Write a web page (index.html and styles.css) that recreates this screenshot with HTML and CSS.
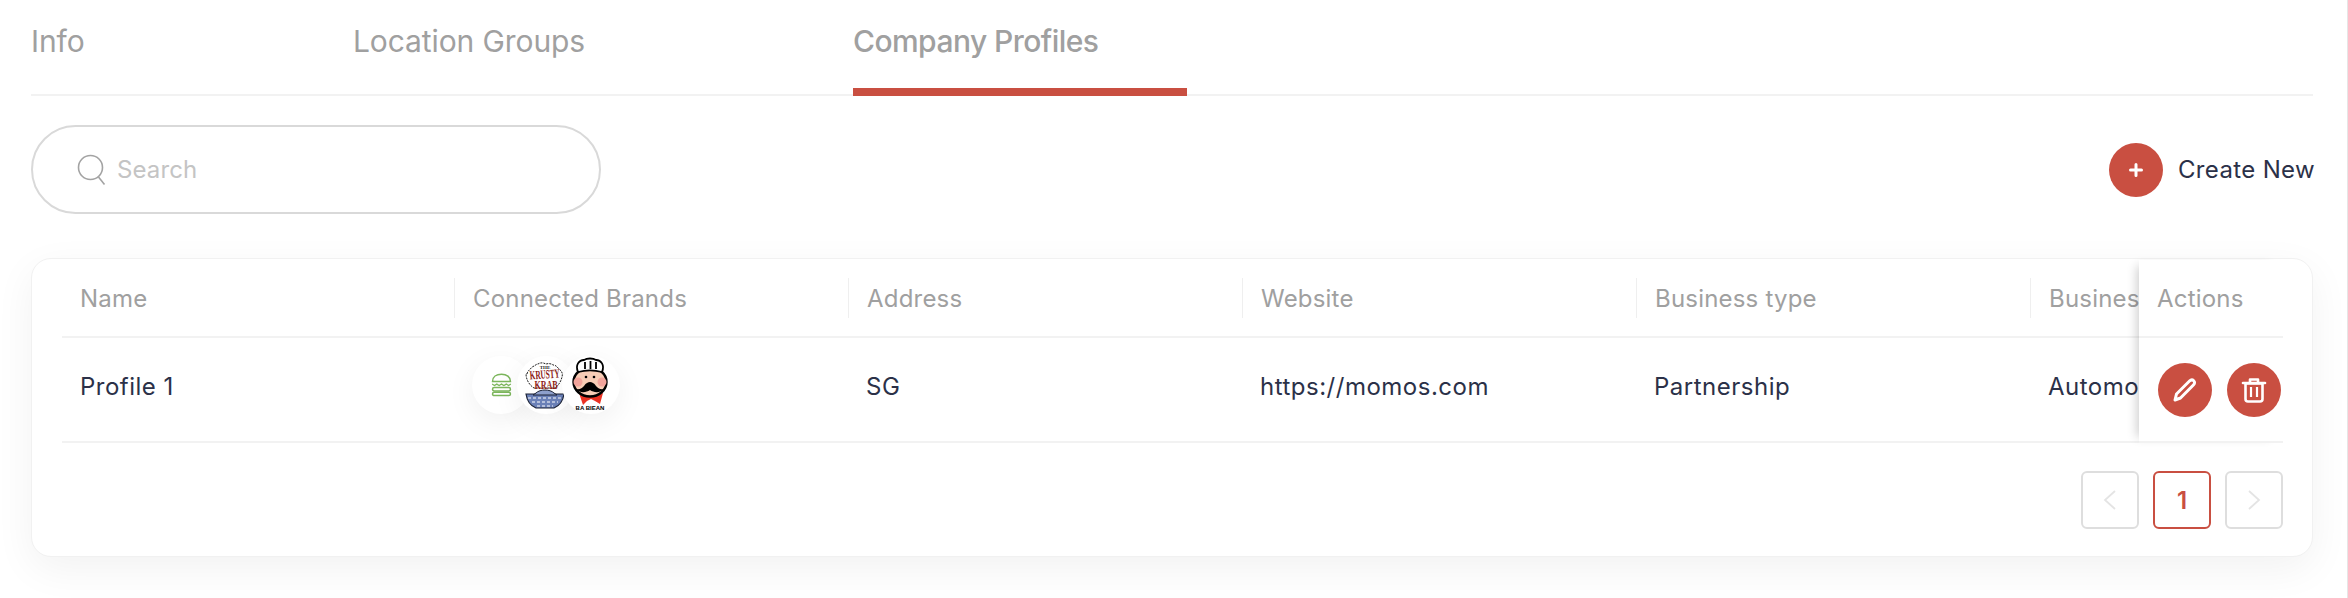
FILE: index.html
```html
<!DOCTYPE html>
<html lang="en">
<head>
<meta charset="utf-8">
<title>Company Profiles</title>
<link rel="stylesheet" href="styles.css">
</head>
<body>
<div class="page">
  <nav class="tabs">
    <a class="tab tab-info">Info</a>
    <a class="tab tab-groups">Location Groups</a>
    <a class="tab tab-profiles active">Company Profiles</a>
  </nav>
  <div class="toolbar">
    <label class="search">
      <svg class="search-icon" width="30" height="32" viewBox="0 0 30 32" fill="none" stroke="#a3a3a3" stroke-width="1.6"><circle cx="13.5" cy="13.5" r="12"/><path d="M21.5 23l6 7.5"/></svg>
      <span class="search-text">Search</span>
    </label>
    <button class="create">
      <span class="create-circle"><svg width="16" height="16" viewBox="0 0 16 16" fill="none" stroke="#fff" stroke-width="3" stroke-linecap="round"><path d="M8 2.5v11M2.5 8h11"/></svg></span>
      <span class="create-label">Create New</span>
    </button>
  </div>
  <section class="card">
    <div class="table">
      <div class="scroll">
        <div class="row head">
          <div class="cell c-name"><span class="txt">Name</span></div>
          <div class="cell sep"><span class="txt">Connected Brands</span></div>
          <div class="cell sep"><span class="txt">Address</span></div>
          <div class="cell sep"><span class="txt">Website</span></div>
          <div class="cell sep"><span class="txt">Business type</span></div>
          <div class="cell sep"><span class="txt">Business Industry</span></div>
        </div>
        <div class="row body">
          <div class="cell c-name"><span class="txt">Profile 1</span></div>
          <div class="cell">
            <div class="brands">
              <span class="brand">
                <svg width="29" height="29" viewBox="0 0 34 34" fill="none" stroke="#7cb65c" stroke-width="1.8"><path d="M6.5 13.5C6.5 8 11 5 17 5s10.500 3 10.500 8.500z"/><path d="M6 16.500l2.700 1.600 2.800-1.600 2.800 1.600 2.700-1.600 2.800 1.600 2.800-1.600 2.700 1.600 2.700-1.600" stroke-width="1.500"/><rect x="6.500" y="20.500" width="21" height="4" rx="2"/><rect x="6.500" y="26" width="21" height="4" rx="2"/></svg>
              </span>
              <span class="brand">
                <svg width="58" height="58" viewBox="0 0 58 58">
                  <path d="M10 18c1-4 3-4 5-7 3-1 4-3 6-3 3-2 6-1 8 0 3-1 6 0 7 1 3 0 4 2 6 4 3 2 4 5 3 8-1 4-3 8-7 11H17c-5-3-8-9-8-14z" fill="#fff" stroke="#222" stroke-width="1" stroke-dasharray="2 1"/>
                  <text class="krab-a" x="28" y="13" text-anchor="middle">THE</text>
                  <text class="krab-b" x="0" y="0" text-anchor="middle" transform="translate(28 22.500) rotate(-4) scale(.72 1.250)">KRUSTY</text>
                  <text class="krab-b" x="0" y="0" text-anchor="middle" transform="translate(29 32.500) scale(.8 1.250)">KRAB</text>
                  <path d="M9 38h38c-1 7-5 12-10 14H19c-5-2-9-7-10-14z" fill="#6b81b8" stroke="#1c2336" stroke-width="1.200"/>
                  <path d="M19 37c4-4 14-4 18 0l3 2H16z" fill="#8ea0cc" stroke="#1c2336"/>
                  <path d="M11 42h34M15 46h26M20 50h16" stroke="#fff" stroke-width="1.200" stroke-dasharray="3 2"/>
                </svg>
              </span>
              <span class="brand">
                <svg width="58" height="58" viewBox="0 0 58 58">
                  <path d="M17 37l12 3 12-3-3 11-5-3-4-2-4 2-4 4z" fill="#ea3223"/>
                  <ellipse cx="28" cy="26" rx="16.500" ry="14.500" fill="#f7cdb6" stroke="#000" stroke-width="2.400"/>
                  <path d="M16 16C13 9 17 4 22 4c3-2 9-2 12 0 5 0 9 5 6 12-7-2-17-2-24 0z" fill="#fff" stroke="#000" stroke-width="1.800"/>
                  <path d="M23 6v7M28.500 5v8M34 6v7" stroke="#000" stroke-width="1.800"/>
                  <circle cx="16" cy="26" r="4.500" fill="#f2a49b"/><circle cx="40" cy="26" r="4.500" fill="#f2a49b"/>
                  <circle cx="24" cy="21" r="1.300"/><circle cx="32" cy="21" r="1.300"/>
                  <path d="M14 33c4 1 6-1 8-3 2-3 4-4 6-4s4 1 6 4c2 2 4 4 8 3-3 4-10 4-14 1-4 3-11 3-14-1z"/>
                  <text class="bean" x="28" y="54" text-anchor="middle">BA BIEAN</text>
                </svg>
              </span>
            </div>
          </div>
          <div class="cell"><span class="txt">SG</span></div>
          <div class="cell"><span class="txt">https://momos.com</span></div>
          <div class="cell"><span class="txt">Partnership</span></div>
          <div class="cell"><span class="txt">Automotive</span></div>
        </div>
      </div>
      <div class="actions">
        <div class="a-head"><span class="txt">Actions</span></div>
        <div class="a-body">
          <button class="round">
            <svg width="28" height="28" viewBox="0 0 28 28" fill="none" stroke="#fff" stroke-width="3" stroke-linejoin="round"><path d="M4 24l1.500-6L18.500 5c1.500-1.500 3-1.500 4.200-.3s1.200 2.800-.3 4.300L9.500 22z"/></svg>
          </button>
          <button class="round">
            <svg width="28" height="28" viewBox="0 0 28 28" fill="none" stroke="#fff" stroke-width="2.600" stroke-linejoin="round"><path d="M3 7h22" stroke-linecap="round"/><path d="M10 6.500V3.500h8v3"/><path d="M5.500 7.500h17V23a2.500 2.500 0 0 1-2.500 2.500H8A2.500 2.500 0 0 1 5.500 23z"/><path d="M11 11v10M17 11v10" stroke-width="2.200"/></svg>
          </button>
        </div>
      </div>
    </div>
    <div class="pager">
      <span class="pg"><svg width="14" height="22" viewBox="0 0 14 22" fill="none" stroke="#e4e4e4" stroke-width="1.800"><path d="M12 2L2 11l10 9"/></svg></span>
      <span class="pg current">1</span>
      <span class="pg"><svg width="14" height="22" viewBox="0 0 14 22" fill="none" stroke="#e4e4e4" stroke-width="1.800"><path d="M2 2l10 9-10 9"/></svg></span>
    </div>
  </section>
</div>
</body>
</html>
```
FILE: styles.css
```css
* { box-sizing: border-box; }
html, body { margin: 0; padding: 0; background: #fff; }
body { font-family: "Inter", "Liberation Sans", sans-serif; color: #2b3148; overflow: hidden; }
.page { width: 2348px; height: 598px; padding: 0 34px 0 31px; border-right: 1px solid #e6e6e6; overflow: hidden; }

.tabs { display: flex; height: 96px; border-bottom: 2px solid #f2f2f2; }
.tab { font-size: 30px; line-height: 82px; color: #a0a0a0; letter-spacing: -0.1px; }
.tab-info { width: 322px; }
.tab-groups { width: 500px; }
.tab-profiles { width: 334px; height: 96px; border-bottom: 8px solid #c94f41; font-weight: 500; letter-spacing: -0.55px; }

.toolbar { display: flex; justify-content: space-between; align-items: center; margin-top: 29px; height: 89px; }
.search { display: flex; align-items: center; gap: 10px; width: 570px; height: 89px; padding-left: 44px; border: 2px solid #d9d9d9; border-radius: 45px; }
.search-text { font-size: 24px; color: #c4c4c4; letter-spacing: 0.1px; }
.create { display: flex; align-items: center; gap: 15px; padding: 0; border: 0; background: none; font: inherit; color: #2b3148; margin-right: -2px; }
.create-circle { display: flex; align-items: center; justify-content: center; width: 54px; height: 54px; border-radius: 50%; background: #c94f41; }
.create-label { font-size: 24px; letter-spacing: 0.35px; }

.card { margin-top: 44px; width: 2282px; height: 299px; padding: 1px 29px 0 30px; background: #fff; border: 1px solid #f1f1f1; border-radius: 20px; box-shadow: 0 12px 40px rgba(0,0,0,.055); }
.table { display: flex; }
.scroll { width: 2077px; overflow: hidden; flex: none; }
.row { display: flex; width: 2500px; }
.head { height: 78px; border-bottom: 2px solid #f2f2f2; align-items: center; }
.body { height: 105px; border-bottom: 2px solid #f2f2f2; align-items: center; }
.cell { width: 394px; flex: none; padding-left: 18px; font-size: 24px; }
.cell.c-name { width: 392px; }
.sep { border-left: 1px solid #efefef; height: 40px; display: flex; align-items: center; }
.head .txt, .a-head .txt { color: #a0a0a0; font-size: 24px; letter-spacing: 0.2px; }
.body .txt { display: block; margin-bottom: 6px; color: #2b3148; letter-spacing: 0.5px; }

.brands { display: flex; margin-bottom: 10px; }
.brand { display: flex; align-items: center; justify-content: center; width: 58px; height: 58px; border-radius: 50%; background: #fff; box-shadow: 0 8px 30px rgba(0,0,0,.06); flex: none; overflow: hidden; }
.brand + .brand { margin-left: -13px; }
.krab-a { font: 700 5px "Liberation Serif", serif; fill: #222; }
.krab-b { font: 700 10px "Liberation Serif", serif; fill: #8d1b16; }
.bean { font: 700 6px "Liberation Sans", sans-serif; fill: #000; }

.actions { width: 144px; flex: none; background: #fff; box-shadow: -8px 0 10px -6px rgba(0,0,0,.2); position: relative; }
.a-head { height: 78px; padding-left: 18px; display: flex; align-items: center; border-bottom: 2px solid #f2f2f2; }
.a-body { height: 105px; display: flex; align-items: center; gap: 15px; padding: 0 2px 0 19px; border-bottom: 2px solid #f2f2f2; }
.round { display: flex; align-items: center; justify-content: center; width: 54px; height: 54px; padding: 0; border: 0; border-radius: 50%; background: #c94f41; flex: none; }

.pager { display: flex; justify-content: flex-end; gap: 14px; margin-top: 28px; }
.pg { display: flex; align-items: center; justify-content: center; width: 58px; height: 58px; border: 2px solid #dedede; border-radius: 6px; background: #fff; }
.pg.current { border-color: #c94f41; color: #c94f41; font: 600 24px "Inter", sans-serif; }
```
